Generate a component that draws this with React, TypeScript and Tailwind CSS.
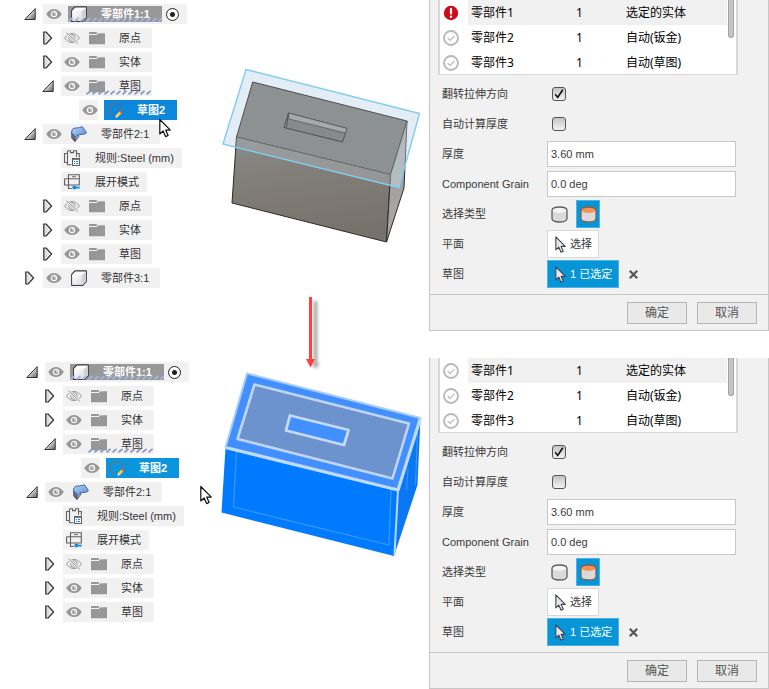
import { useId, useState } from "react";
import type { ReactNode } from "react";

type IconName = "body" | "folder" | "sketch" | "flange" | "rule" | "flat";

type Node = {
  label: string;
  level: 0 | 1 | 2;
  icon: IconName;
  arrow?: "open" | "closed";
  eye?: "on" | "off";
  tone?: "active" | "selected" | "hovered";
  hatched?: boolean;
};

const baseNodes: Node[] = [
  { label: "零部件1:1", level: 0, icon: "body", arrow: "open", eye: "on", tone: "active", hatched: true },
  { label: "原点", level: 1, icon: "folder", arrow: "closed", eye: "off" },
  { label: "实体", level: 1, icon: "folder", arrow: "closed", eye: "on" },
  { label: "草图", level: 1, icon: "folder", arrow: "open", eye: "on", hatched: true },
  { label: "草图2", level: 2, icon: "sketch", eye: "on", tone: "selected" },
  { label: "零部件2:1", level: 0, icon: "flange", arrow: "open", eye: "on" },
  { label: "规则:Steel (mm)", level: 1, icon: "rule" },
  { label: "展开模式", level: 1, icon: "flat" },
  { label: "原点", level: 1, icon: "folder", arrow: "closed", eye: "off" },
  { label: "实体", level: 1, icon: "folder", arrow: "closed", eye: "on" },
  { label: "草图", level: 1, icon: "folder", arrow: "closed", eye: "on" },
];

const firstNodes: Node[] = [
  ...baseNodes.map((node): Node => (node.tone === "selected" ? { ...node, tone: "hovered" } : node)),
  { label: "零部件3:1", level: 0, icon: "body", arrow: "closed", eye: "on" },
];

function Gradients() {
  return (
    <svg width="0" height="0" className="absolute" aria-hidden="true">
      <defs>
        <linearGradient id="open-arrow" x1="0" y1="0" x2="1" y2="1">
          <stop offset="0.35" stopColor="#f4f4f4" />
          <stop offset="1" stopColor="#5a5a5a" />
        </linearGradient>
        <linearGradient id="closed-arrow" x1="0" y1="0" x2="1" y2="0">
          <stop offset="0" stopColor="#d5d5d5" />
          <stop offset="1" stopColor="#f5f5f5" />
        </linearGradient>
        <linearGradient id="cube-face" x1="0" y1="0" x2="1" y2="1">
          <stop offset="0" stopColor="#ffffff" />
          <stop offset="1" stopColor="#d9dbe2" />
        </linearGradient>
        <linearGradient id="flange-face" x1="0" y1="0" x2="1" y2="1">
          <stop offset="0" stopColor="#b4d2f6" />
          <stop offset="1" stopColor="#5a8ad0" />
        </linearGradient>
        <linearGradient id="front-face" x1="0" y1="0" x2="0.2" y2="1">
          <stop offset="0" stopColor="#8b8c8b" />
          <stop offset="0.45" stopColor="#817d77" />
          <stop offset="1" stopColor="#77736c" />
        </linearGradient>
        <linearGradient id="side-face" x1="0" y1="0" x2="0" y2="1">
          <stop offset="0" stopColor="#999e9f" />
          <stop offset="1" stopColor="#a9a7a3" />
        </linearGradient>
        <pattern id="hatch" width="6" height="5" patternUnits="userSpaceOnUse">
          <path d="M1.200 3.800 4 1.400" stroke="#8798c2" strokeWidth="1.800" strokeLinecap="round" />
        </pattern>
        <pattern id="hatch-light" width="6" height="5" patternUnits="userSpaceOnUse">
          <path d="M1.200 3.800 4 1.400" stroke="#a3b6e0" strokeWidth="1.800" strokeLinecap="round" />
        </pattern>
        <filter id="arrow-blur" x="-1" y="-0.2" width="3" height="1.400">
          <feGaussianBlur stdDeviation="1.500" />
        </filter>
      </defs>
    </svg>
  );
}

function ArrowIcon({ open }: { open: boolean }) {
  return open ? (
    <svg width="12" height="14" viewBox="0 0 12 14" aria-hidden="true">
      <path d="M.8 12.500h10.400V1.600z" fill="url(#open-arrow)" stroke="#333" strokeWidth="1" />
    </svg>
  ) : (
    <svg width="12" height="14" viewBox="0 0 12 14" aria-hidden="true">
      <path d="M1.800 1h2.400l5.400 6-5.400 6H1.800z" fill="url(#closed-arrow)" stroke="#2c2c2c" strokeWidth="1.200" />
    </svg>
  );
}

function EyeIcon({ off }: { off?: boolean }) {
  return off ? (
    <svg width="16" height="12" viewBox="0 0 16 12" fill="none" stroke="#8c8c8c" strokeWidth="0.900" aria-hidden="true">
      <path d="M.6 6C3 2.600 5.400 1.500 8 1.500S13 2.600 15.400 6C13 9.400 10.600 10.500 8 10.500S3 9.400.6 6z" />
      <circle cx="8" cy="6" r="3.300" />
      <circle cx="8" cy="6" r="1.300" />
      <path d="M2.500.6 13.800 11.500" stroke="#f1f1f1" strokeWidth="2.200" />
      <path d="M2.500.6 13.800 11.500" />
    </svg>
  ) : (
    <svg width="16" height="12" viewBox="0 0 16 12" aria-hidden="true">
      <path d="M.2 6C2.600 2.200 5.200.9 8 .9S13.400 2.200 15.800 6C13.400 9.800 10.800 11.100 8 11.100S2.600 9.800.2 6z" fill="#979797" />
      <circle cx="8" cy="6" r="2.600" fill="#979797" stroke="#f5f5f5" strokeWidth="1.300" />
      <circle cx="8.600" cy="5.400" r="0.800" fill="#f5f5f5" />
    </svg>
  );
}

function NodeIcon({ name }: { name: IconName }) {
  switch (name) {
    case "folder":
      return (
        <svg width="16" height="16" viewBox="0 0 16 16" fill="#979797" aria-hidden="true">
          <path d="M0 2h7.400l1.100.9-1.100 1H0z" />
          <path d="M0 5h7.600l2-1.800H16v11H0z" />
        </svg>
      );
    case "body":
      return (
        <svg width="16" height="16" viewBox="0 0 16 16" stroke="#3a3a42" strokeLinejoin="round" aria-hidden="true">
          <path d="M.7 4.400 4 .8h11.300v10.800l-3.600 3.700H.7z" fill="#fff" strokeWidth="1.200" />
          <path d="M1.300 4.700h10.200v10H1.300z" fill="url(#cube-face)" stroke="none" />
          <path d="M11.800 4.500 15 1.200v10.300l-3.200 3.300z" fill="#d0d1d6" stroke="none" />
          <path d="M11.700 4.500v10.400" stroke="#b9bac0" strokeWidth="0.600" />
        </svg>
      );
    case "sketch":
      return (
        <svg width="16" height="16" viewBox="0 0 16 16" fill="none" aria-hidden="true">
          <path d="M2.500 2h10.500M1.500 3.500v8.500M13.500 3.500V8M3 13h5" stroke="#87655f" strokeWidth="1.200" strokeDasharray="3.800 0.800" />
          <path d="m9 13 3.600-3.700 2 2-3.600 3.800-2.400.4z" fill="#f6cc4c" />
          <path d="m12.200 9.600 1.300-1.300 2.200 2.100-1.400 1.400z" fill="#ef4b43" />
          <path d="m9 13-.5 2.500 2.400-.5z" fill="#fff0b4" />
        </svg>
      );
    case "flange":
      return (
        <svg width="16" height="16" viewBox="0 0 16 16" strokeLinejoin="round" aria-hidden="true">
          <path d="M.8 7v5.300l3.200 3V11z" fill="#6f7784" stroke="#3a3e4a" strokeWidth="0.900" />
          <path d="m4 15.300-.2-4.300 3.200-3 .8 2.400z" fill="#aab3c2" stroke="#3a3e4a" strokeWidth="0.900" />
          <path d="M3.900 11.800C3.700 9.400 2.300 8.200.7 7.300.2 3.800 1.800 1.900 4.800 2c3 .2 4.600-1.100 6.700-1.100l4 5.800c-2 2-3.600 1.500-5.500 1.700-2.800.3-4.500 1.200-6.100 3.400z" fill="url(#flange-face)" stroke="#3d63a6" strokeWidth="1" />
        </svg>
      );
    case "rule":
      return (
        <svg width="16" height="16" viewBox="0 0 16 16" fill="none" stroke="#606060" aria-hidden="true">
          <path d="M3.500 3.500h-3v9h3M12.500 3.500h2.800v4M3.500.8h3v1.800h3V.8h3v6M3.500.8v13.900h4" strokeWidth="1.100" />
          <path d="M3.500 4v8" strokeWidth="0.500" strokeDasharray="2 1" />
          <rect x="8.500" y="8.500" width="7" height="7" fill="#f7f7f7" strokeWidth="1" />
          <path d="M8 9h8" strokeWidth="1.600" />
          <path d="M10 11.500h1M12 11.500h2M10 13.500h1M12 13.500h2" stroke="#1583d8" strokeWidth="1" />
        </svg>
      );
    case "flat":
      return (
        <svg width="16" height="16" viewBox="0 0 16 16" fill="none" stroke="#606060" aria-hidden="true">
          <path d="M4.500.7h10.800V11H4.500zM.6 4.700h14.700M.6 4.700V11h3.900v3.500h3.300" strokeWidth="1.100" />
          <path d="M8 2.700h4" strokeWidth="0.900" />
          <circle cx="10.300" cy="13.600" r="2" fill="#168be0" stroke="none" />
          <path d="M10 13.600h5.800" stroke="#168be0" strokeWidth="1.800" />
        </svg>
      );
  }
}

function Hatch({ light }: { light: boolean }) {
  return (
    <svg className={`pointer-events-none absolute inset-x-0 h-[5px] w-full ${light ? "bottom-0" : "bottom-px"}`} aria-hidden="true">
      <rect width="100%" height="5" fill={light ? "url(#hatch-light)" : "url(#hatch)"} />
    </svg>
  );
}

const indents = ["pl-6", "pl-[42px]", "pl-[60px]"];
const tones = {
  plain: "h-5 text-[#333]",
  active: "h-4 bg-[#989898] font-bold text-white",
  selected: "h-5 bg-[#0b95dc] font-bold text-white",
  hovered: "h-5 bg-[#0b87dc] font-bold text-white",
};

function TreeRow({ node }: { node: Node }) {
  const picked = node.tone === "selected" || node.tone === "hovered";
  const spacing = node.tone ? "gap-3.5 pr-3" : node.eye ? "gap-3.5 pr-[11px]" : "gap-[15px] pr-2";
  return (
    <li className={`flex h-5 items-center ${indents[node.level]}`}>
      <div className="mr-[7px] flex w-3 shrink-0">
        {node.arrow && (
          <button type="button" aria-label={node.label} aria-expanded={node.arrow === "open"}>
            <ArrowIcon open={node.arrow === "open"} />
          </button>
        )}
      </div>
      <div className="flex h-5 items-center bg-[#f1f1f1]">
        {node.eye && (
          <button type="button" aria-label={node.label} className={`pl-[3px] ${picked ? "pr-0" : "pr-1.5"}`}>
            <EyeIcon off={node.eye === "off"} />
          </button>
        )}
        {picked && <span className="h-5 w-1.5 bg-white" />}
        <div className={`relative flex items-center pl-[3px] ${spacing} ${tones[node.tone ?? "plain"]}`}>
          <NodeIcon name={node.icon} />
          <span className="whitespace-nowrap">{node.label}</span>
          {node.hatched && <Hatch light={node.tone === "active"} />}
        </div>
        {node.tone === "active" && (
          <input
            type="radio"
            defaultChecked
            aria-label={node.label}
            className="mx-1 mr-2 size-[13px] appearance-none rounded-full border border-[#222] bg-white bg-[radial-gradient(circle,#222_0_2px,transparent_3px)]"
          />
        )}
      </div>
    </li>
  );
}

function Tree({ nodes, shifted }: { nodes: Node[]; shifted?: boolean }) {
  return (
    <ul className={`flex w-[190px] shrink-0 flex-col gap-1 pt-1 text-[11px] leading-4 ${shifted ? "pl-0.5" : ""}`}>
      {nodes.map((node, i) => (
        <TreeRow key={i} node={node} />
      ))}
    </ul>
  );
}

function Pointer({ large }: { large?: boolean }) {
  return (
    <svg
      width={large ? 12 : 11}
      height={large ? 20 : 17}
      viewBox="0 0 12 19"
      fill={large ? "#fff" : "#e6e8ec"}
      stroke={large ? "#111" : "#3c424c"}
      strokeWidth="1.200"
      strokeLinejoin="round"
      aria-hidden="true"
    >
      <path d="M.8 1v14.500l3.300-3 2.500 5.600 2.500-1.100-2.400-5.400h4.600z" />
    </svg>
  );
}

function SolidBox() {
  return (
    <svg width="239" height="331" viewBox="190 0 239 331" className="overflow-visible" strokeLinejoin="round" aria-hidden="true">
      <path d="M246 69.500 419.500 113.500 399 187.500 223 144z" fill="#e3edf5" />
      <path d="m236.500 137 154 37.500-4 67.500L232 203z" fill="url(#front-face)" stroke="#2c2a28" />
      <path d="m407 121-3 67-17.500 54 4-67.500z" fill="url(#side-face)" stroke="#2c2a28" />
      <path d="m252.700 82 154.300 39-16.500 53.500-154-37.500z" fill="#8e9192" stroke="#4c4f50" />
      <path d="m236.500 137 154 37.500-.8 10.500-153.700-38.500z" fill="#a2a6a8" opacity=".65" />
      <path d="m390.500 174.500 16.500-53.500 4 20-12 46.500-9-2z" fill="#dcecf6" opacity=".35" />
      <path d="m288.500 113 58.500 15.500-4.500 13.500-58.500-14.500z" fill="#878a8b" stroke="#4d5051" />
      <path d="m288.500 113 58.500 15.500-1.500 4.500-56.500-14z" fill="#a6aaab" stroke="#595c5d" strokeWidth=".8" />
      <path d="m288.500 113-2 14.500" stroke="#4d5051" strokeWidth=".8" />
      <path d="M246 69.500 419.500 113.500 399 187.500 223 144z" fill="none" stroke="#82cdf3" strokeWidth="1.400" />
      <path d="M313.500 301h4v62h2.500l-4.500 6-4.500-6h2.500z" fill="#777" opacity=".6" filter="url(#arrow-blur)" />
      <path d="M310.500 297v63" stroke="#ff4040" strokeWidth="3" />
      <path d="M306 359h9l-4.500 8.500z" fill="#ff4040" />
    </svg>
  );
}

function HighlightedBox() {
  return (
    <svg width="239" height="331" viewBox="190 358 239 331" strokeLinejoin="round" aria-hidden="true">
      <path d="M225.500 447.500 398 490l-4 66-172.500-43.500z" fill="#007bff" />
      <path d="m420.500 418-3 67L394 556l4-66z" fill="#0a78f5" />
      <path d="M236.500 452 233.500 507 389 545l2-55" fill="none" stroke="#3c99ff" strokeWidth="1.200" />
      <path d="m408 468-1.500 22M417.500 432l-2 53" fill="none" stroke="#3c99ff" />
      <path d="m398 490-3.500 65" stroke="#b8d7fa" strokeWidth="2" />
      <path d="m247 373.500 173.500 44.500L398 490l-172.500-42.500z" fill="#428fff" />
      <path d="m225.500 447.500 172.500 42.500 22.500-72" fill="none" stroke="#c1daf8" strokeWidth="3.200" />
      <path d="m420.500 418L247 373.500l-21.500 74" fill="none" stroke="#a7ccfa" strokeWidth="2" />
      <path d="m254.500 384.500 154.500 39-16.500 55-155-39.500z" fill="#6c93cd" stroke="#c0d5f2" strokeWidth="2.600" />
      <path d="m290 415.500 58.500 14.500-4.500 15-58-14.500z" fill="#428fff" stroke="#c6daf5" strokeWidth="2.800" />
    </svg>
  );
}

function StatusIcon({ error }: { error: boolean }) {
  return error ? (
    <svg width="16" height="16" viewBox="0 0 16 16" aria-hidden="true">
      <circle cx="8" cy="8" r="7.200" fill="#cf0a18" />
      <path d="M8 3.800v4.600" stroke="#fff" strokeWidth="2.200" strokeLinecap="round" />
      <circle cx="8" cy="11.800" r="1.200" fill="#fff" />
    </svg>
  ) : (
    <svg width="16" height="16" viewBox="0 0 16 16" fill="none" stroke="#b9b9b9" aria-hidden="true">
      <circle cx="8" cy="8" r="7" strokeWidth="1.900" />
      <path d="m4.600 8 2.500 2.400 4.200-4.300" strokeWidth="1.200" />
    </svg>
  );
}

function CylinderIcon({ lit }: { lit?: boolean }) {
  return (
    <svg width="17" height="17" viewBox="0 0 17 17" aria-hidden="true">
      <path d="M1 4v8.500C1 15 4 16 8.500 16s7.500-1 7.500-3.500V4z" fill="#dadada" />
      <ellipse cx="8.500" cy="4" rx="7.300" ry="3" fill={lit ? "#f89254" : "#f4f4f4"} />
      <path d="M1 4.500C1 2 3.500 1 8.500 1S16 2 16 4.500v8c0 2.500-3 3.500-7.500 3.500S1 15 1 12.500z" fill="none" stroke={lit ? "#84604f" : "#5f5f5f"} strokeWidth="1.300" />
    </svg>
  );
}

function CheckBox({ id, checked }: { id: string; checked: boolean }) {
  return (
    <span className="relative ml-[5px] flex">
      <input
        id={id}
        type="checkbox"
        defaultChecked={checked}
        className="peer size-3.5 appearance-none rounded-[3px] border border-[#555] bg-linear-to-b from-[#c4c4c4] to-[#f2f2f2]"
      />
      <svg width="14" height="14" viewBox="0 0 13 13" className="pointer-events-none absolute inset-0 opacity-0 peer-checked:opacity-100" fill="none" stroke="#111" strokeWidth="1.500" aria-hidden="true">
        <path d="m3 6.800 2.300 2.900 4.700-7.200" />
      </svg>
    </span>
  );
}

function Field({ label, htmlFor, children }: { label: string; htmlFor: string; children: ReactNode }) {
  return (
    <div className="flex h-[30px] items-center">
      <label htmlFor={htmlFor} className="w-[105px] shrink-0 whitespace-nowrap">
        {label}
      </label>
      {children}
    </div>
  );
}

const parts = [
  ["零部件1", "1", "选定的实体"],
  ["零部件2", "1", "自动(钣金)"],
  ["零部件3", "1", "自动(草图)"],
];

function Panel({ failed }: { failed: boolean }) {
  const id = useId();
  const [topOnly, setTopOnly] = useState(true);
  const inputClass = "h-[26px] min-w-0 flex-1 border border-[#c8c8c8] bg-white px-[3px] outline-none";
  const typeClass = "flex h-7 w-6 items-center justify-center border";
  return (
    <form className="w-[340px] shrink-0 border border-t-0 border-[#c6c6c6] bg-[#f1f1f1] text-[11px] leading-4 text-[#3a3a3a]" onSubmit={(e) => e.preventDefault()}>
      <div className="mr-[30px] ml-2 flex border-x-2 border-b border-[#d8d8d8] bg-white">
        <table className="w-full flex-1 table-fixed border-collapse text-left text-[12px] font-normal text-black [font-family:'Noto_Sans','Noto_Sans_CJK_SC',sans-serif]">
          <colgroup>
            <col className="w-7" />
            <col className="w-[105px]" />
            <col className="w-[50px]" />
            <col />
          </colgroup>
          <tbody>
            {parts.map(([name, count, kind], i) => {
              const cell = i === 0 ? "bg-[#f0f0f0] p-0 pl-[3px]" : i === 2 ? "p-0 pt-px pl-[3px]" : "p-0 pl-[3px]";
              return (
                <tr key={name} className={i === 2 ? "h-6" : "h-[25px]"}>
                  <td className={i === 2 ? "p-0 pt-px pl-[3px]" : "p-0 pl-[3px]"}>
                    <StatusIcon error={failed && i === 0} />
                  </td>
                  <td className={cell}>{name}</td>
                  <td className={cell}>{count}</td>
                  <td className={cell}>{kind}</td>
                </tr>
              );
            })}
          </tbody>
        </table>
        <div className="mr-0.5 ml-px h-[38px] w-1.5 rounded-b-full border border-t-0 border-[#a2a2a2] bg-[#c4c4c4]" />
      </div>
      <div className="border-b border-[#c6c6c6] pt-1 pr-8 pb-[5px] pl-3">
        <Field label="翻转拉伸方向" htmlFor={`${id}-flip`}>
          <CheckBox id={`${id}-flip`} checked />
        </Field>
        <Field label="自动计算厚度" htmlFor={`${id}-auto`}>
          <CheckBox id={`${id}-auto`} checked={false} />
        </Field>
        <Field label="厚度" htmlFor={`${id}-thickness`}>
          <input id={`${id}-thickness`} className={inputClass} defaultValue="3.60 mm" />
        </Field>
        <Field label="Component Grain" htmlFor={`${id}-grain`}>
          <input id={`${id}-grain`} className={inputClass} defaultValue="0.0 deg" />
        </Field>
        <Field label="选择类型" htmlFor={`${id}-type`}>
          <div className="flex gap-[5px]">
            <button id={`${id}-type`} type="button" aria-pressed={!topOnly} onClick={() => setTopOnly(false)} className={`${typeClass} ${topOnly ? "border-transparent" : "border-[#4db3e6] bg-[#0696d7]"}`}>
              <CylinderIcon />
            </button>
            <button type="button" aria-label="草图" aria-pressed={topOnly} onClick={() => setTopOnly(true)} className={`${typeClass} ${topOnly ? "border-[#4db3e6] bg-[#0696d7]" : "border-transparent"}`}>
              <CylinderIcon lit />
            </button>
          </div>
        </Field>
        <Field label="平面" htmlFor={`${id}-plane`}>
          <button id={`${id}-plane`} type="button" className="flex h-7 items-center gap-1 border border-[#d8d8d8] bg-white pr-1.5 pl-[7px] whitespace-nowrap">
            <Pointer />
            选择
          </button>
        </Field>
        <Field label="草图" htmlFor={`${id}-sketch`}>
          <button id={`${id}-sketch`} type="button" className="flex h-7 items-center gap-1 border border-[#4db3e6] bg-[#0696d7] pr-1.5 pl-[7px] whitespace-nowrap text-white">
            <Pointer />
            1 已选定
          </button>
          <button type="button" aria-label="取消" className="ml-2.5">
            <svg width="9" height="9" viewBox="0 0 9 9" stroke="#555" strokeWidth="2.200" aria-hidden="true">
              <path d="m.8.8 7.400 7.400M8.200.8.8 8.200" />
            </svg>
          </button>
        </Field>
      </div>
      <div className="flex justify-end gap-2.5 py-[7px] pr-[11px] pb-1.5 text-[12px] text-[#555]">
        <button type="submit" className="h-[22px] w-[60px] border border-[#b4b4b4] bg-[#e9e9e9]">
          确定
        </button>
        <button type="button" className="h-[22px] w-[60px] border border-[#b4b4b4] bg-[#e9e9e9]">
          取消
        </button>
      </div>
    </form>
  );
}

export default function App() {
  return (
    <main className="flex flex-col gap-[27px] bg-white [font-family:'Liberation_Sans','Noto_Sans_CJK_SC',sans-serif]">
      <Gradients />
      <section className="relative flex items-start">
        <Tree nodes={firstNodes} />
        <div className="flex flex-1">
          <SolidBox />
        </div>
        <Panel failed />
        <div className="pointer-events-none absolute top-[118px] left-[159px]">
          <Pointer large />
        </div>
      </section>
      <section className="relative flex items-start">
        <Tree nodes={baseNodes} shifted />
        <div className="flex flex-1">
          <HighlightedBox />
        </div>
        <Panel failed={false} />
        <div className="pointer-events-none absolute top-[127px] left-[200px]">
          <Pointer large />
        </div>
      </section>
    </main>
  );
}
